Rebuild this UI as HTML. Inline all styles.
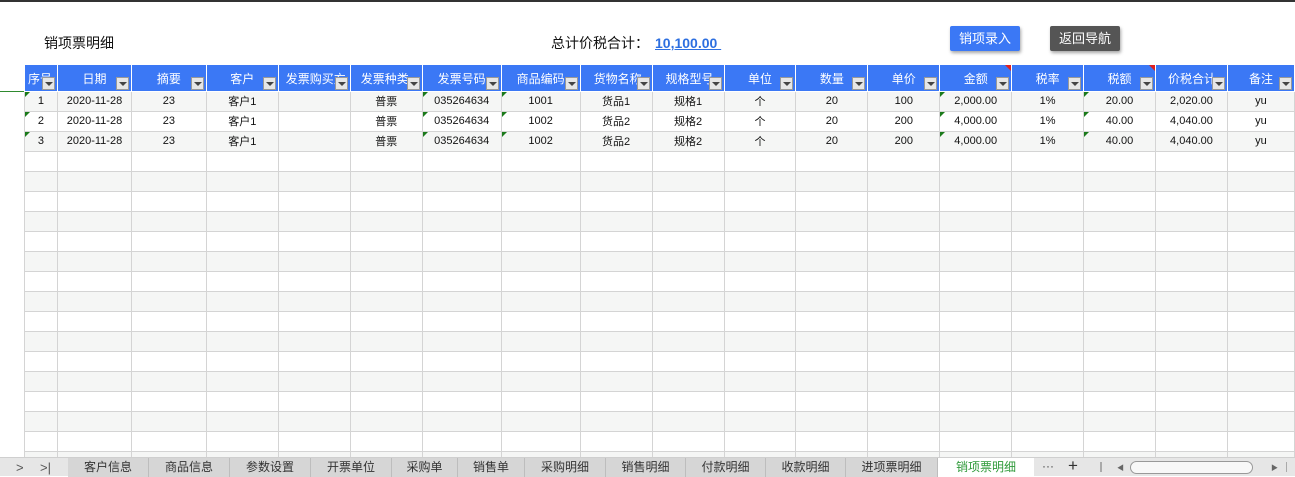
<!DOCTYPE html>
<html><head><meta charset="utf-8"><style>
*{margin:0;padding:0;box-sizing:border-box}
body{width:1295px;height:476px;overflow:hidden;background:#fff;position:relative;font-family:"Liberation Sans","Noto Sans CJK SC",sans-serif;color:#111}
.top{position:absolute;left:0;top:0;width:1295px;height:2px;background:#333}
.title{position:absolute;left:44px;top:33px;font-size:14px}
.sum{position:absolute;left:551px;top:33px;font-size:14px}
.sum a{color:#2d6fe0;font-weight:bold;text-decoration:underline;margin-left:6px;font-size:14px}
.btn{position:absolute;top:26px;height:25px;color:#fff;font-size:13px;line-height:25px;text-align:center;border-radius:2px;box-shadow:1px 2px 3px rgba(0,0,0,.35)}
table{position:absolute;left:24px;top:65px;border-collapse:collapse;table-layout:fixed;font-size:11px}
td{border:1px solid #d4d4d4;height:20px;text-align:center;white-space:nowrap;overflow:hidden;position:relative;padding:0}
tr.h td{background:#3b78f5;color:#fff;height:26px;border:1px solid #fff;border-top:none;font-size:12px;vertical-align:top;padding-top:5px;text-align:center}
tr.g td{background:#f5f6f5}
.dd{position:absolute;right:2px;bottom:1px;width:13px;height:13px;background:#e6e6e6;border:1px solid #999}
.dd:after{content:"";position:absolute;left:2px;top:4px;border-left:4px solid transparent;border-right:4px solid transparent;border-top:4px solid #444}
.gr:before{content:"";position:absolute;left:0;top:0;border-right:5px solid transparent;border-top:5px solid #1b7a1b}
.rd:after{content:"";position:absolute;right:0;top:0;border-left:6px solid transparent;border-top:6px solid #e02020}
.tabs{position:absolute;left:0;top:457px;width:1295px;height:19px;background:#e6e6e6;border-top:1px solid #cfcfcf;font-size:12px}
.tab{position:absolute;top:0;height:19px;background:#d6d6d6;border-right:1px solid #bdbdbd;text-align:center;line-height:19px;color:#333}
.gl{position:absolute;left:0;top:91px;width:25px;height:1px;background:#2f8a2f}
</style></head><body>
<div class="top"></div>
<div class="title">销项票明细</div>
<div class="sum">总计价税合计：<a>10,100.00&nbsp;</a></div>
<div class="btn" style="left:950px;width:70px;background:#3b78f5">销项录入</div>
<div class="btn" style="left:1050px;width:70px;background:#555">返回导航</div>
<div class="gl"></div>
<table>
<colgroup><col style="width:33px"><col style="width:74px"><col style="width:75px"><col style="width:72px"><col style="width:72px"><col style="width:72px"><col style="width:79px"><col style="width:79px"><col style="width:72px"><col style="width:72px"><col style="width:72px"><col style="width:72px"><col style="width:72px"><col style="width:72px"><col style="width:72px"><col style="width:72px"><col style="width:72px"><col style="width:67px"></colgroup>
<tr class="h"><td style="text-align:left;padding-left:3px">序号<i class="dd"></i></td><td>日期<i class="dd"></i></td><td>摘要<i class="dd"></i></td><td>客户<i class="dd"></i></td><td style="text-align:left;padding-left:7px">发票购买方<i class="dd"></i></td><td style="text-align:left;padding-left:10px">发票种类<i class="dd"></i></td><td>发票号码<i class="dd"></i></td><td>商品编码<i class="dd"></i></td><td style="text-align:left;padding-left:13px">货物名称<i class="dd"></i></td><td style="text-align:left;padding-left:13px">规格型号<i class="dd"></i></td><td>单位<i class="dd"></i></td><td>数量<i class="dd"></i></td><td>单价<i class="dd"></i></td><td class="rd">金额<i class="dd"></i></td><td>税率<i class="dd"></i></td><td class="rd">税额<i class="dd"></i></td><td style="text-align:left;padding-left:12px">价税合计<i class="dd"></i></td><td>备注<i class="dd"></i></td></tr>
<tr class="g"><td class="gr">1</td><td>2020-11-28</td><td>23</td><td>客户1</td><td></td><td>普票</td><td class="gr">035264634</td><td class="gr">1001</td><td>货品1</td><td>规格1</td><td>个</td><td>20</td><td>100</td><td class="gr">2,000.00</td><td>1%</td><td class="gr">20.00</td><td>2,020.00</td><td>yu</td></tr>
<tr><td class="gr">2</td><td>2020-11-28</td><td>23</td><td>客户1</td><td></td><td>普票</td><td class="gr">035264634</td><td class="gr">1002</td><td>货品2</td><td>规格2</td><td>个</td><td>20</td><td>200</td><td class="gr">4,000.00</td><td>1%</td><td class="gr">40.00</td><td>4,040.00</td><td>yu</td></tr>
<tr class="g"><td class="gr">3</td><td>2020-11-28</td><td>23</td><td>客户1</td><td></td><td>普票</td><td class="gr">035264634</td><td class="gr">1002</td><td>货品2</td><td>规格2</td><td>个</td><td>20</td><td>200</td><td class="gr">4,000.00</td><td>1%</td><td class="gr">40.00</td><td>4,040.00</td><td>yu</td></tr>
<tr><td></td><td></td><td></td><td></td><td></td><td></td><td></td><td></td><td></td><td></td><td></td><td></td><td></td><td></td><td></td><td></td><td></td><td></td></tr>
<tr class="g"><td></td><td></td><td></td><td></td><td></td><td></td><td></td><td></td><td></td><td></td><td></td><td></td><td></td><td></td><td></td><td></td><td></td><td></td></tr>
<tr><td></td><td></td><td></td><td></td><td></td><td></td><td></td><td></td><td></td><td></td><td></td><td></td><td></td><td></td><td></td><td></td><td></td><td></td></tr>
<tr class="g"><td></td><td></td><td></td><td></td><td></td><td></td><td></td><td></td><td></td><td></td><td></td><td></td><td></td><td></td><td></td><td></td><td></td><td></td></tr>
<tr><td></td><td></td><td></td><td></td><td></td><td></td><td></td><td></td><td></td><td></td><td></td><td></td><td></td><td></td><td></td><td></td><td></td><td></td></tr>
<tr class="g"><td></td><td></td><td></td><td></td><td></td><td></td><td></td><td></td><td></td><td></td><td></td><td></td><td></td><td></td><td></td><td></td><td></td><td></td></tr>
<tr><td></td><td></td><td></td><td></td><td></td><td></td><td></td><td></td><td></td><td></td><td></td><td></td><td></td><td></td><td></td><td></td><td></td><td></td></tr>
<tr class="g"><td></td><td></td><td></td><td></td><td></td><td></td><td></td><td></td><td></td><td></td><td></td><td></td><td></td><td></td><td></td><td></td><td></td><td></td></tr>
<tr><td></td><td></td><td></td><td></td><td></td><td></td><td></td><td></td><td></td><td></td><td></td><td></td><td></td><td></td><td></td><td></td><td></td><td></td></tr>
<tr class="g"><td></td><td></td><td></td><td></td><td></td><td></td><td></td><td></td><td></td><td></td><td></td><td></td><td></td><td></td><td></td><td></td><td></td><td></td></tr>
<tr><td></td><td></td><td></td><td></td><td></td><td></td><td></td><td></td><td></td><td></td><td></td><td></td><td></td><td></td><td></td><td></td><td></td><td></td></tr>
<tr class="g"><td></td><td></td><td></td><td></td><td></td><td></td><td></td><td></td><td></td><td></td><td></td><td></td><td></td><td></td><td></td><td></td><td></td><td></td></tr>
<tr><td></td><td></td><td></td><td></td><td></td><td></td><td></td><td></td><td></td><td></td><td></td><td></td><td></td><td></td><td></td><td></td><td></td><td></td></tr>
<tr class="g"><td></td><td></td><td></td><td></td><td></td><td></td><td></td><td></td><td></td><td></td><td></td><td></td><td></td><td></td><td></td><td></td><td></td><td></td></tr>
<tr><td></td><td></td><td></td><td></td><td></td><td></td><td></td><td></td><td></td><td></td><td></td><td></td><td></td><td></td><td></td><td></td><td></td><td></td></tr>
<tr class="g"><td></td><td></td><td></td><td></td><td></td><td></td><td></td><td></td><td></td><td></td><td></td><td></td><td></td><td></td><td></td><td></td><td></td><td></td></tr>
</table>
<div class="tabs">
<span style="position:absolute;left:16px;top:0;line-height:19px;font-size:13px;color:#555">&gt;</span>
<span style="position:absolute;left:40px;top:0;line-height:19px;font-size:13px;color:#555">&gt;|</span>
<div class="tab" style="left:68px;width:81px">客户信息</div>
<div class="tab" style="left:149px;width:81px">商品信息</div>
<div class="tab" style="left:230px;width:81px">参数设置</div>
<div class="tab" style="left:311px;width:81px">开票单位</div>
<div class="tab" style="left:392px;width:66px">采购单</div>
<div class="tab" style="left:458px;width:67px">销售单</div>
<div class="tab" style="left:525px;width:81px">采购明细</div>
<div class="tab" style="left:606px;width:80px">销售明细</div>
<div class="tab" style="left:686px;width:80px">付款明细</div>
<div class="tab" style="left:766px;width:80px">收款明细</div>
<div class="tab" style="left:846px;width:92px">进项票明细</div>
<div class="tab" style="left:938px;width:96px;background:#fff;color:#2f9a3a;border:none">销项票明细</div>
<span style="position:absolute;left:1042px;top:0;line-height:17px;color:#444">···</span>
<span style="position:absolute;left:1068px;top:-2px;font-size:17px;color:#333">+</span>
<span style="position:absolute;left:1100px;top:4px;width:2px;height:10px;border-left:1px solid #aaa;border-right:1px solid #aaa"></span>
<span style="position:absolute;left:1117px;top:5px;font-size:7px;color:#666">◀</span>
<div style="position:absolute;left:1130px;top:3px;width:123px;height:13px;border:1px solid #999;border-radius:7px;background:#f8f8f8"></div>
<span style="position:absolute;left:1271px;top:5px;font-size:7px;color:#666">▶</span>
<span style="position:absolute;left:1286px;top:4px;width:2px;height:10px;border-left:1px solid #aaa"></span>
</div>
</body></html>
